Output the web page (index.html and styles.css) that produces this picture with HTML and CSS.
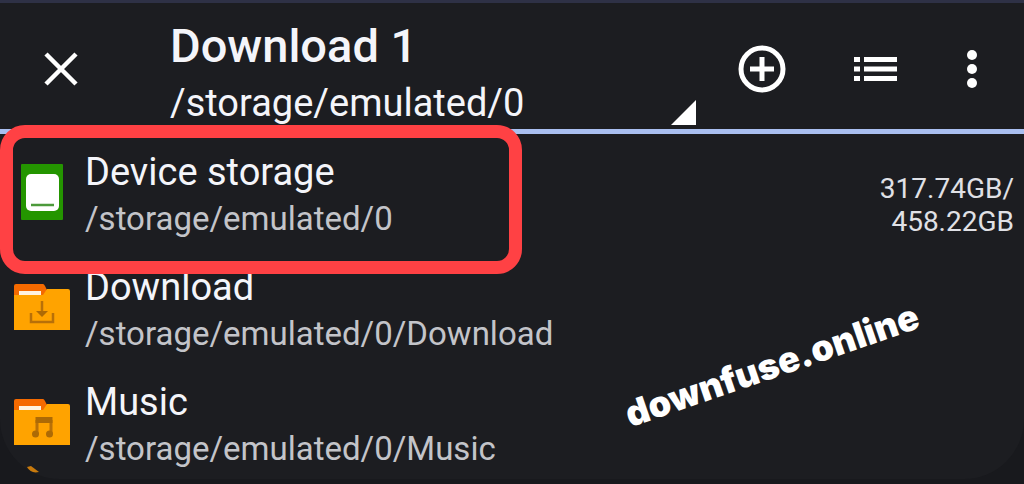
FILE: index.html
```html
<!DOCTYPE html>
<html lang="en">
<head>
<meta charset="utf-8">
<meta name="viewport" content="width=device-width, initial-scale=1">
<title>Download 1</title>
<link rel="stylesheet" href="styles.css">
</head>
<body>
<div class="screen">
  <header class="toolbar">
    <button class="icon-button close" type="button" aria-label="Close">
      <svg width="34" height="34" viewBox="0 0 34 34"><path d="M2 2 32 32M32 2 2 32" stroke="#fff" stroke-width="4.500" fill="none"/></svg>
    </button>
    <button class="location" type="button">
      <span class="location-name">Download 1</span>
      <span class="location-path">/storage/emulated/0</span>
      <svg class="corner" width="25" height="25" viewBox="0 0 25 25"><path d="M25 0V25H0Z" fill="#fff"/></svg>
    </button>
    <nav class="actions">
      <button class="icon-button" type="button" aria-label="Add">
        <svg width="48" height="48" viewBox="0 0 48 48"><circle cx="24" cy="24" r="21" fill="none" stroke="#fff" stroke-width="5"/><path d="M24 12V36M12 24H36" stroke="#fff" stroke-width="5"/></svg>
      </button>
      <button class="icon-button" type="button" aria-label="List view">
        <svg width="44" height="26" viewBox="0 0 44 26"><path d="M0 3.5H6M10 3.5H43M0 13H6M10 13H43M0 22.5H6M10 22.5H43" stroke="#fff" stroke-width="5"/></svg>
      </button>
      <button class="icon-button" type="button" aria-label="More options">
        <svg width="12" height="40" viewBox="0 0 12 40"><g fill="#fff"><circle cx="6" cy="6" r="5"/><circle cx="6" cy="20" r="5"/><circle cx="6" cy="34" r="5"/></g></svg>
      </button>
    </nav>
  </header>
  <main class="panel">
    <ul class="places">
      <li><button class="place" type="button">
        <svg class="place-icon" width="56" height="56" viewBox="0 0 56 56"><rect x="7" width="42" height="56" rx="1" fill="#249500"/><rect x="12" y="10" width="33" height="37" rx="5" fill="#fff"/><path d="M17 41H40" stroke="#4c9a3b" stroke-width="2.5"/></svg>
        <span class="place-text"><span class="place-name">Device storage</span><span class="place-path">/storage/emulated/0</span></span>
        <span class="space">317.74GB/<br>458.22GB</span>
      </button></li>
      <li><button class="place" type="button">
        <svg class="place-icon" width="56" height="46" viewBox="0 0 56 46"><path d="M0 12V2Q0 0 2 0H29Q30 0 31 2L33 6V12Z" fill="#f56a00"/><path d="M0 11H29L33 5H54Q56 5 56 7V46H0Z" fill="#ffa300"/><path d="M5 9H27" stroke="#fff3df" stroke-width="4"/><path d="M28 17V30M17 29V38H39V29" fill="none" stroke="#b87008" stroke-width="2.500"/><path d="M22 27H34L28 33Z" fill="#ad6a05"/></svg>
        <span class="place-text"><span class="place-name">Download</span><span class="place-path">/storage/emulated/0/Download</span></span>
      </button></li>
      <li><button class="place" type="button">
        <svg class="place-icon" width="56" height="46" viewBox="0 0 56 46"><path d="M0 12V2Q0 0 2 0H29Q30 0 31 2L33 6V12Z" fill="#f56a00"/><path d="M0 11H29L33 5H54Q56 5 56 7V46H0Z" fill="#ffa300"/><path d="M5 9H27" stroke="#fff3df" stroke-width="4"/><path d="M23 35V21M37 35V21" fill="none" stroke="#b87008" stroke-width="3"/><path d="M21.500 18H38.500V24H21.500Z" fill="#ad6a05"/><circle cx="21.500" cy="35" r="3.500" fill="#ad6a05"/><circle cx="35.500" cy="35" r="3.500" fill="#ad6a05"/></svg>
        <span class="place-text"><span class="place-name">Music</span><span class="place-path">/storage/emulated/0/Music</span></span>
      </button></li>
    </ul>
    <svg class="peek" width="12" height="7" viewBox="0 0 12 7"><path d="M0 1 4 0 12 6Q4 8 0 1Z" fill="#c87a0d"/></svg>
    <div class="highlight"></div>
    <div class="watermark">downfuse.online</div>
  </main>
</div>
</body>
</html>
```
FILE: styles.css
```css
* { box-sizing: border-box; }
body {
  margin: 0;
  background: #18191d;
  color: #f4f5fa;
  font-family: Roboto, "Noto Sans", sans-serif;
}
button {
  padding: 0;
  border: 0;
  background: none;
  color: inherit;
  font: inherit;
  text-align: left;
}
svg { display: block; flex: none; }
.screen {
  min-height: 100vh;
  border-top: 3px solid #2e3146;
  overflow: hidden;
}
.toolbar {
  display: flex;
  align-items: stretch;
  border-bottom: 5px solid #a9bff0;
  background: #1c1d21;
}
.icon-button {
  display: flex;
  align-items: center;
  justify-content: center;
}
.close { width: 122px; padding-top: 5px; }
.location {
  position: relative;
  flex: 1;
  display: flex;
  flex-direction: column;
  margin-left: 48px;
  padding-top: 15px;
}
.location-name {
  font-size: 47px;
  font-weight: 500;
  line-height: 55px;
}
.location-path {
  padding-top: 4px;
  font-size: 38px;
  line-height: 52px;
}
.corner { position: absolute; right: 0; bottom: 4px; }
.actions {
  display: flex;
  gap: 68px;
  padding: 5px 46px 0 42px;
}
.panel {
  position: relative;
  border-radius: 0 0 60px 60px;
  background: #1c1d21;
}
.places { margin: 0; padding: 0; list-style: none; }
.place {
  display: flex;
  align-items: center;
  gap: 15px;
  width: 100%;
  min-height: 115px;
  padding: 0 10px 0 14px;
}
.place-text {
  flex: 1;
  display: flex;
  flex-direction: column;
  padding-top: 8px;
}
.place-name { font-size: 38px; line-height: 46px; }
.place-path { font-size: 33px; line-height: 47px; color: #c3c4c9; }
.space {
  padding-top: 26px;
  font-size: 28px;
  line-height: 33px;
  text-align: right;
  color: #e0e1e6;
}
.highlight {
  position: absolute;
  top: -9px;
  left: 0;
  width: 522px;
  height: 149px;
  border: 13px solid #ff4144;
  border-radius: 25px;
}
.watermark {
  position: absolute;
  top: 208px;
  right: 98px;
  color: #fff;
  font: 900 36px/46px Inter, sans-serif;
  transform: rotate(-19deg);
}
.peek { position: absolute; left: 27px; bottom: 6px; }
```
